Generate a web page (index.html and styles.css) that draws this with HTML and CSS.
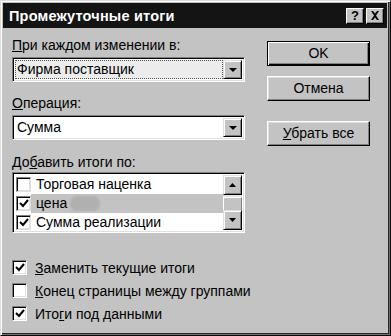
FILE: index.html
```html
<!DOCTYPE html>
<html lang="ru">
<head>
<meta charset="utf-8">
<link rel="stylesheet" href="styles.css">
</head>
<body>
<div class="window">
  <div class="titlebar">
    <span class="title">Промежуточные итоги</span>
    <div class="tbtns">
      <span class="tbtn">?</span>
      <span class="tbtn close"><svg width="10" height="9" viewBox="0 0 10 9"><path d="M1 0h2l2 2.5L7 0h2L6 4.5 9 9H7L5 6.5 3 9H1l3-4.5z" fill="#000"/></svg></span>
    </div>
  </div>
  <div class="content">
    <div class="top">
      <div class="left">
        <div class="label l1"><u>П</u>ри каждом изменении в:</div>
        <div class="combo focus">
          <span class="ctext"><span class="dots">Фирма поставщик</span></span>
          <span class="dd"><svg width="8" height="4" viewBox="0 0 8 4"><path d="M0 0h8L4 4z" fill="#000"/></svg></span>
        </div>
        <div class="label l2"><u>О</u>перация:</div>
        <div class="combo">
          <span class="ctext">Сумма</span>
          <span class="dd"><svg width="8" height="4" viewBox="0 0 8 4"><path d="M0 0h8L4 4z" fill="#000"/></svg></span>
        </div>
        <div class="label l3">До<u>б</u>авить итоги по:</div>
        <div class="list">
          <div class="rows">
            <div class="row"><span class="cb"></span><span class="rtext">Торговая наценка</span></div>
            <div class="row sel"><span class="cb on"><svg width="10" height="9" viewBox="0 0 10 9"><path d="M1 4l3 3 5-6" stroke="#000" stroke-width="2" fill="none"/></svg></span><span class="rtext">цена <span class="blur"></span></span></div>
            <div class="row"><span class="cb on"><svg width="10" height="9" viewBox="0 0 10 9"><path d="M1 4l3 3 5-6" stroke="#000" stroke-width="2" fill="none"/></svg></span><span class="rtext">Сумма реализации</span></div>
          </div>
          <div class="sbar">
            <span class="sbtn"><svg width="7" height="4" viewBox="0 0 7 4"><path d="M0 4h7L3.5 0z" fill="#000"/></svg></span>
            <span class="track"><span class="thumb"></span></span>
            <span class="sbtn"><svg width="7" height="4" viewBox="0 0 7 4"><path d="M0 0h7L3.5 4z" fill="#000"/></svg></span>
          </div>
        </div>
      </div>
      <div class="right">
        <div class="btn default"><span>OK</span></div>
        <div class="btn">Отмена</div>
        <div class="btn b3"><u>У</u>брать все</div>
      </div>
    </div>
    <div class="checks">
      <div class="chk"><span class="cb on"><svg width="10" height="9" viewBox="0 0 10 9"><path d="M1 4l3 3 5-6" stroke="#000" stroke-width="2" fill="none"/></svg></span><span><u>З</u>аменить текущие итоги</span></div>
      <div class="chk"><span class="cb"></span><span><u>К</u>онец страницы между группами</span></div>
      <div class="chk"><span class="cb on"><svg width="10" height="9" viewBox="0 0 10 9"><path d="M1 4l3 3 5-6" stroke="#000" stroke-width="2" fill="none"/></svg></span><span>Ито<u>г</u>и под данными</span></div>
    </div>
  </div>
</div>
</body>
</html>
```
FILE: styles.css
```css
* { box-sizing: border-box; }
html, body { margin: 0; padding: 0; background: #c3c3c3; }
body { font-family: "Liberation Sans", Arial, sans-serif; font-size: 14px; color: #000; }
.window {
  width: 391px; height: 336px;
  background: #c3c3c3;
  border-top: 1px solid #dcdcdc; border-left: 1px solid #dcdcdc;
  border-right: 1px solid #0a0a0a; border-bottom: 1px solid #0a0a0a;
  box-shadow: inset 1px 1px #fff, inset -1px -1px #6e6e6e, inset -2px -2px #2a2a2a;
  padding: 2px 3px 3px 2px;
  display: flex; flex-direction: column;
}
.titlebar {
  height: 25px; background: #141414; color: #fff;
  display: flex; align-items: center; justify-content: space-between;
  padding: 0 3px 0 6px;
}
.title { font-weight: bold; font-size: 14.5px; letter-spacing: 0.2px; }
.tbtns { display: flex; gap: 2px; }
.tbtn {
  width: 18px; height: 16px; background: #c3c3c3; color: #000;
  font-weight: bold; font-size: 13px; line-height: 14px; text-align: center;
  border-top: 1px solid #fff; border-left: 1px solid #fff;
  border-right: 1px solid #000; border-bottom: 1px solid #000;
  box-shadow: inset -1px -1px #808080;
  display: flex; align-items: center; justify-content: center;
}
.content { padding: 0 0 0 9px; flex: 1; display: flex; flex-direction: column; }
.top { display: flex; }
.left { width: 233px; display: flex; flex-direction: column; }
.label { height: 16px; line-height: 16px; }
.l1 { margin-top: 9px; }
.l2 { margin-top: 13px; }
.l3 { margin-top: 14px; }
.combo {
  margin-top: 4px; height: 25px; background: #fff;
  border-top: 1px solid #808080; border-left: 1px solid #808080;
  border-right: 1px solid #fff; border-bottom: 1px solid #fff;
  box-shadow: inset 1px 1px #000, inset -1px -1px #dfdfdf;
  display: flex; align-items: center; padding: 2px;
}
.ctext { flex: 1; padding-left: 2px; height: 19px; line-height: 19px; }
.focus .ctext { background: #ececec; outline: 1px dotted #555; outline-offset: -1px; }
.dd {
  width: 19px; height: 19px; background: #c3c3c3;
  border-top: 1px solid #dfdfdf; border-left: 1px solid #dfdfdf;
  border-right: 1px solid #000; border-bottom: 1px solid #000;
  box-shadow: inset 1px 1px #fff, inset -1px -1px #808080;
  display: flex; align-items: center; justify-content: center;
}
.list {
  margin-top: 2px; height: 61px; background: #fff;
  border-top: 1px solid #808080; border-left: 1px solid #808080;
  border-right: 1px solid #fff; border-bottom: 1px solid #fff;
  box-shadow: inset 1px 1px #000, inset -1px -1px #dfdfdf;
  display: flex; padding: 2px;
}
.rows { flex: 1; display: flex; flex-direction: column; }
.row { height: 19px; display: flex; align-items: center; padding-left: 1px; }
.row .rtext { flex: 1; height: 19px; line-height: 19px; padding-left: 5px; display: flex; align-items: center; }
.row.sel .rtext { background: #c3c3c3; }
.blur { display: inline-block; width: 30px; height: 15px; border-radius: 7px; background: #b0b0b0; margin-left: 3px; filter: blur(1px); }
.cb {
  width: 15px; height: 15px; background: #fff; flex: none;
  border-top: 1px solid #808080; border-left: 1px solid #808080;
  border-right: 1px solid #fff; border-bottom: 1px solid #fff;
  box-shadow: inset 1px 1px #000, inset -1px -1px #dfdfdf;
  display: flex; align-items: center; justify-content: center;
}
.row .cb { border-right-color: #dfdfdf; border-bottom-color: #dfdfdf; }
.sbar { width: 19px; display: flex; flex-direction: column; }
.sbtn {
  height: 20px; background: #c3c3c3;
  border-top: 1px solid #dfdfdf; border-left: 1px solid #dfdfdf;
  border-right: 1px solid #000; border-bottom: 1px solid #000;
  box-shadow: inset 1px 1px #fff, inset -1px -1px #808080;
  display: flex; align-items: center; justify-content: center;
}
.track { flex: 1; background: #e6e6e6; display: flex; }
.thumb { flex: 1; margin-top: 2px; background: #c3c3c3; border-top: 1px solid #fff; border-left: 1px solid #fff; border-right: 1px solid #808080; }
.right { margin-left: 22px; width: 103px; display: flex; flex-direction: column; padding-top: 13px; }
.btn {
  height: 25px; background: #c3c3c3; text-align: center; line-height: 23px;
  border-top: 1px solid #fff; border-left: 1px solid #fff;
  border-right: 1px solid #000; border-bottom: 1px solid #000;
  box-shadow: inset -1px -1px #808080, inset 1px 1px #dfdfdf;
  margin-bottom: 10px;
}
.btn.default { border: 1px solid #000; box-shadow: inset 1px 1px #fff, inset -1px -1px #000, inset -2px -2px #808080; }
.btn.b3 { margin-top: 10px; }
.checks { margin-top: 27px; display: flex; flex-direction: column; gap: 8px; }
.chk { display: flex; align-items: center; height: 15px; gap: 8px; }
```
